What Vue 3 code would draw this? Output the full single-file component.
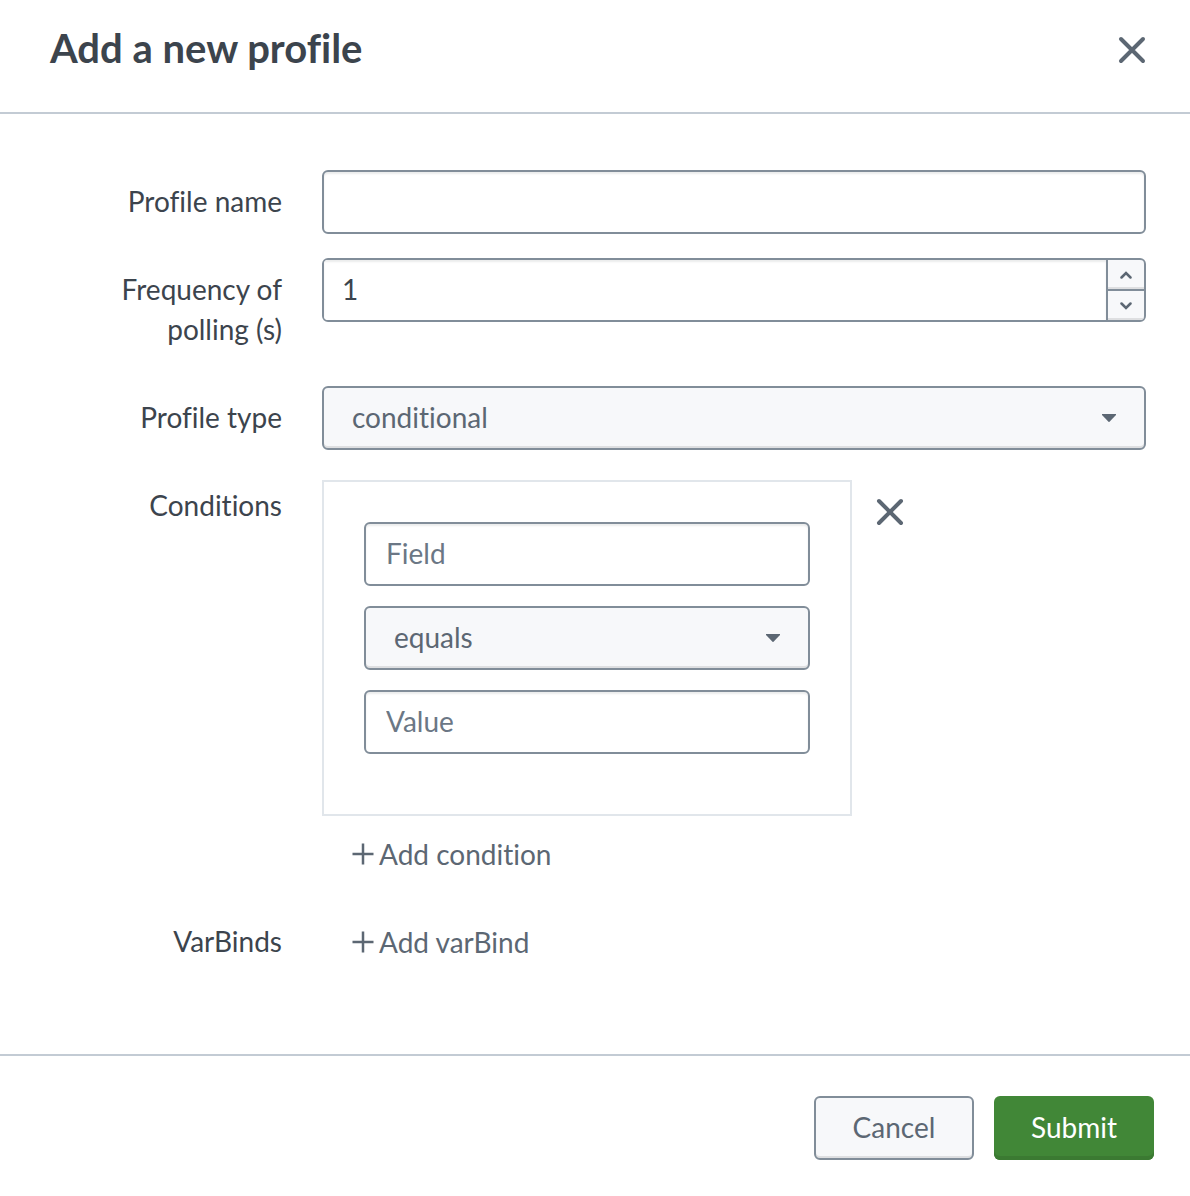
<script setup>
import { ref } from 'vue'

const profileName = ref('')
const frequency = ref(1)
const profileType = ref('conditional')
const conditions = ref([{ id: 1, field: '', operation: 'equals', value: '' }])
const varBinds = ref([])
let nextId = 2

function addCondition() {
  conditions.value.push({ id: nextId++, field: '', operation: 'equals', value: '' })
}
function removeCondition(id) {
  conditions.value = conditions.value.filter((c) => c.id !== id)
}
function addVarBind() {
  varBinds.value.push({ id: nextId++, name: '' })
}
function step(delta) {
  frequency.value = Math.max(1, Number(frequency.value) + delta)
}
</script>

<template>
  <form class="dialog" @submit.prevent>
    <header class="header">
      <h1 class="title">Add a new profile</h1>
      <button type="button" class="icon-button" aria-label="Close">
        <svg class="cross" viewBox="0 0 28 28" aria-hidden="true"><path d="M3 3 25 25M25 3 3 25" /></svg>
      </button>
    </header>

    <main class="body">
      <div class="row">
        <label class="label" for="profile-name">Profile name</label>
        <div class="control">
          <input id="profile-name" v-model="profileName" class="input" type="text" />
        </div>
      </div>

      <div class="row">
        <label class="label" for="frequency">Frequency of polling (s)</label>
        <div class="control">
          <div class="number">
            <input id="frequency" v-model="frequency" class="number-input" type="number" min="1" />
            <div class="stepper">
              <button type="button" class="step" aria-label="Increase" @click="step(1)">
                <svg class="chevron" viewBox="0 0 12 8" aria-hidden="true"><path d="M1.5 6.5 6 2l4.5 4.5" /></svg>
              </button>
              <button type="button" class="step" aria-label="Decrease" @click="step(-1)">
                <svg class="chevron" viewBox="0 0 12 8" aria-hidden="true"><path d="M1.5 1.5 6 6l4.5-4.5" /></svg>
              </button>
            </div>
          </div>
        </div>
      </div>

      <div class="row">
        <label class="label" for="profile-type">Profile type</label>
        <div class="control">
          <div class="select-wrap">
            <select id="profile-type" v-model="profileType" class="select">
              <option>standard</option>
              <option>conditional</option>
              <option>walk</option>
            </select>
            <svg class="caret" viewBox="0 0 14 8" aria-hidden="true"><path d="M0 0h14v1L7.5 7.7q-.5.5-1 0L0 1z" /></svg>
          </div>
        </div>
      </div>

      <div class="row">
        <span class="label">Conditions</span>
        <div class="control">
          <div v-for="c in conditions" :key="c.id" class="condition">
            <div class="card">
              <input v-model="c.field" class="input" type="text" placeholder="Field" aria-label="Field" />
              <div class="select-wrap">
                <select v-model="c.operation" class="select" aria-label="Operation">
                  <option>equals</option>
                  <option>gt</option>
                  <option>lt</option>
                  <option>in</option>
                </select>
                <svg class="caret" viewBox="0 0 14 8" aria-hidden="true"><path d="M0 0h14v1L7.5 7.7q-.5.5-1 0L0 1z" /></svg>
              </div>
              <input v-model="c.value" class="input" type="text" placeholder="Value" aria-label="Value" />
            </div>
            <button type="button" class="icon-button remove" aria-label="Remove condition" @click="removeCondition(c.id)">
              <svg class="cross" viewBox="0 0 28 28" aria-hidden="true"><path d="M3 3 25 25M25 3 3 25" /></svg>
            </button>
          </div>
          <button type="button" class="add" @click="addCondition">
            <svg class="plus" viewBox="0 0 22 22" aria-hidden="true"><path d="M11 0.5v21M0.5 11h21" /></svg>
            Add condition
          </button>
        </div>
      </div>

      <div class="row">
        <span class="label">VarBinds</span>
        <div class="control">
          <input v-for="v in varBinds" :key="v.id" v-model="v.name" class="input" type="text" aria-label="VarBind" />
          <button type="button" class="add" @click="addVarBind">
            <svg class="plus" viewBox="0 0 22 22" aria-hidden="true"><path d="M11 0.5v21M0.5 11h21" /></svg>
            Add varBind
          </button>
        </div>
      </div>
    </main>

    <footer class="footer">
      <button type="button" class="button">Cancel</button>
      <button type="submit" class="button primary">Submit</button>
    </footer>
  </form>
</template>

<style>
body {
  background: #fff;
}
</style>

<style scoped>
.dialog,
.dialog * {
  box-sizing: border-box;
}
.dialog {
  color: #3c444d;
  font-family: Lato, "Liberation Sans", sans-serif;
  font-size: 28px;
  line-height: 40px;
  font-variant-ligatures: none;
}
button,
input,
select {
  margin: 0;
  font: inherit;
  font-variant-ligatures: none;
}
button {
  cursor: pointer;
}
.header {
  display: flex;
  align-items: flex-start;
  justify-content: space-between;
  padding: 24px 44px 36px 50px;
  border-bottom: 2px solid #c3cbd4;
}
.title {
  margin: 0;
  font-size: 40px;
  font-weight: 700;
  line-height: 48px;
}
.icon-button {
  display: flex;
  align-items: center;
  justify-content: center;
  width: 28px;
  height: 52px;
  padding: 0;
  border: 0;
  background: none;
}
.cross {
  width: 28px;
  height: 28px;
  fill: none;
  stroke: #5c6773;
  stroke-width: 4;
  stroke-linecap: round;
}
.body {
  display: flex;
  flex-direction: column;
  gap: 24px;
  padding: 56px 44px 80px;
}
.row {
  display: flex;
  align-items: flex-start;
  gap: 40px;
}
.label {
  flex: 0 0 238px;
  padding: 11px 0 13px;
  text-align: right;
}
.control {
  flex: 1;
  min-width: 0;
}
.input,
.number,
.select {
  width: 100%;
  height: 64px;
  border: 2px solid #818d99;
  border-radius: 6px;
}
.input {
  display: block;
  padding: 0 20px 2px;
  background: #fff;
  color: #3c444d;
  box-shadow: inset 0 2px 2px #ebeced;
}
.input::placeholder {
  color: #6b7785;
  opacity: 1;
}
.number {
  display: flex;
  overflow: hidden;
}
.number-input {
  flex: 1;
  min-width: 0;
  padding: 0 18px 2px;
  border: 0;
  background: #fff;
  color: #3c444d;
  box-shadow: inset 0 2px 2px #ebeced;
  appearance: textfield;
}
.number-input::-webkit-inner-spin-button {
  appearance: none;
}
.stepper {
  display: flex;
  flex-direction: column;
  gap: 2px;
  width: 38px;
  padding-left: 2px;
  background: #818d99;
}
.step {
  display: flex;
  flex: 1;
  align-items: center;
  justify-content: center;
  padding: 0;
  border: 0;
  background: #f7f8fa;
  box-shadow: inset 0 -2px #dedfe1;
}
.chevron {
  width: 12px;
  height: 8px;
  fill: none;
  stroke: #5c6773;
  stroke-width: 2.5;
  stroke-linecap: round;
}
.select-wrap {
  position: relative;
}
.select {
  display: block;
  padding: 0 56px 2px 28px;
  appearance: none;
  background: #f7f8fa;
  color: #5c6773;
  box-shadow: inset 0 -2px #dedfe1;
}
.caret {
  position: absolute;
  top: 28px;
  right: 30px;
  width: 14px;
  height: 8px;
  fill: #5c6773;
  pointer-events: none;
}
.condition {
  display: flex;
  gap: 24px;
  margin: 6px 0;
}
.card {
  display: flex;
  flex: 0 1 530px;
  flex-direction: column;
  gap: 20px;
  min-width: 0;
  padding: 40px 40px 60px;
  border: 2px solid #e1e6eb;
}
.remove {
  height: 64px;
}
.add {
  display: flex;
  align-items: center;
  gap: 5px;
  height: 64px;
  padding: 0 30px;
  border: 0;
  background: none;
  color: #5c6773;
}
.plus {
  width: 22px;
  height: 22px;
  fill: none;
  stroke: #5c6773;
  stroke-width: 2.5;
}
.footer {
  display: flex;
  justify-content: flex-end;
  gap: 20px;
  padding: 40px 36px 36px;
  border-top: 2px solid #c3cbd4;
}
.button {
  min-width: 160px;
  height: 64px;
  padding: 0 30px 2px;
  border: 2px solid #818d99;
  border-radius: 6px;
  background: #f7f8fa;
  color: #5c6773;
  box-shadow: inset 0 -2px #dedfe1;
}
.primary {
  border: 0;
  background: #418737;
  color: #fff;
  box-shadow: inset 0 -4px #3b7a32;
}
</style>
